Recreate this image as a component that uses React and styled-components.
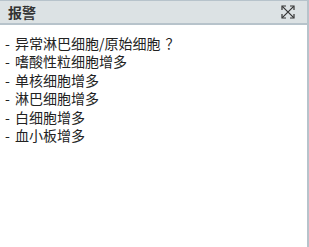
import styled, { createGlobalStyle } from "styled-components";

const Global = createGlobalStyle`
  html, body {
    margin: 0;
    padding: 0;
    background: #ffffff;
  }
  body {
    font-family: "Noto Sans CJK SC", "Liberation Sans", sans-serif;
  }
`;

const Panel = styled.div`
  width: 309px;
  height: 247px;
  box-sizing: border-box;
  border-right: 2px solid #b7c3cb;
  display: flex;
  flex-direction: column;
`;

const Header = styled.div`
  height: 25px;
  box-sizing: border-box;
  background: #dce2e4;
  border-top: 1px solid #b7c3cb;
  border-bottom: 2px solid #b7c3cb;
  display: flex;
  align-items: center;
  justify-content: space-between;
  padding: 0 12px 0 8px;
`;

const Title = styled.span`
  font-size: 14px;
  font-weight: 700;
  color: #333333;
`;

const ExpandButton = styled.span`
  width: 14px;
  height: 14px;
  display: flex;
  color: #333333;
`;

const List = styled.ul`
  list-style: none;
  margin: 0;
  padding: 9px 0 0 5px;
`;

const Item = styled.li`
  font-size: 14px;
  line-height: 18.4px;
  color: #222222;
  white-space: nowrap;
`;

const Dash = styled.span`
  display: inline-block;
  width: 10px;
`;

const Query = styled.span`
  margin-left: 5px;
`;

const alarms = [
  { text: "异常淋巴细胞/原始细胞", query: true },
  { text: "嗜酸性粒细胞增多" },
  { text: "单核细胞增多" },
  { text: "淋巴细胞增多" },
  { text: "白细胞增多" },
  { text: "血小板增多" },
];

export default function App() {
  return (
    <>
      <Global />
      <Panel>
        <Header>
          <Title>报警</Title>
          <ExpandButton>
            <svg width="14" height="14" viewBox="0 0 14 14" fill="none" stroke="currentColor" strokeWidth="1.2">
              <path d="M1 5V1h4M9 1h4v4M13 9v4H9M5 13H1V9" />
              <path d="M1.3 1.3l11.4 11.4M12.7 1.3L1.3 12.7" />
            </svg>
          </ExpandButton>
        </Header>
        <List>
          {alarms.map((a) => (
            <Item key={a.text}>
              <Dash>-</Dash>
              {a.text}
              {a.query && <Query>？</Query>}
            </Item>
          ))}
        </List>
      </Panel>
    </>
  );
}
